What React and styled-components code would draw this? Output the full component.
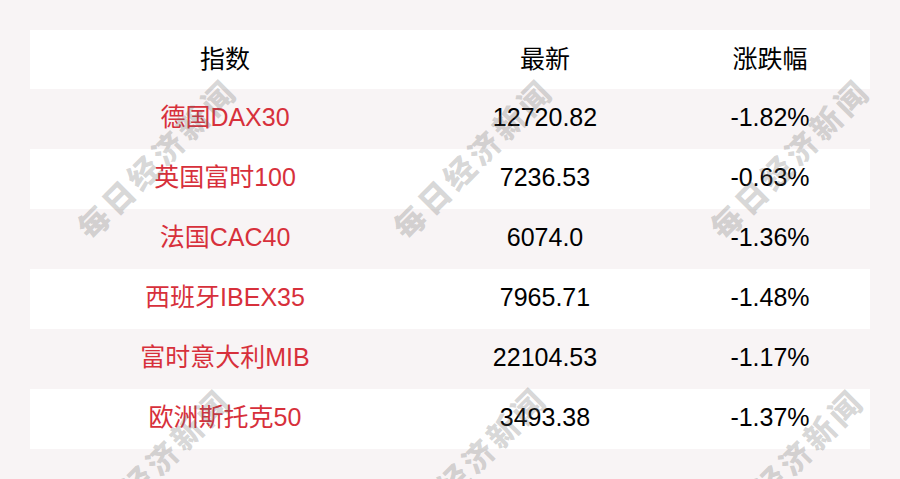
import React from "react";
import styled, { createGlobalStyle } from "styled-components";

const Global = createGlobalStyle`
  html, body { margin: 0; padding: 0; background: #f8f4f5; }
  body { font-family: "Liberation Sans", "Noto Sans CJK SC", sans-serif; }
`;

const Page = styled.div`
  position: relative;
  width: 900px;
  height: 479px;
  overflow: hidden;
  background: #f8f4f5;
  padding: 30px;
  box-sizing: border-box;
`;

const Table = styled.div`
  display: grid;
  grid-template-columns: 390px 250px 200px;
  width: 840px;
`;

const Row = styled.div`
  display: contents;
`;

const Cell = styled.div`
  height: ${(p) => (p.$header ? 59 : 60)}px;
  box-sizing: border-box;
  padding-bottom: ${(p) => (p.$header ? 0 : 3)}px;
  display: flex;
  align-items: center;
  justify-content: center;
  background: ${(p) => (p.$striped ? "#f8f4f5" : "#ffffff")};
  color: ${(p) => (p.$red ? "#d7303b" : "#000000")};
  font-size: 25px;
  line-height: 1;
  white-space: nowrap;
`;

const Watermark = styled.div`
  position: absolute;
  left: ${(p) => p.$x}px;
  top: ${(p) => p.$y}px;
  transform: translate(-50%, -50%) rotate(-45deg);
  font-family: "Noto Sans CJK SC", sans-serif;
  font-weight: 900;
  font-size: 31px;
  letter-spacing: 4px;
  color: rgba(100, 100, 100, 0.26);
  white-space: nowrap;
  pointer-events: none;
`;

const rows = [
  ["德国DAX30", "12720.82", "-1.82%"],
  ["英国富时100", "7236.53", "-0.63%"],
  ["法国CAC40", "6074.0", "-1.36%"],
  ["西班牙IBEX35", "7965.71", "-1.48%"],
  ["富时意大利MIB", "22104.53", "-1.17%"],
  ["欧洲斯托克50", "3493.38", "-1.37%"],
];

const marks = [
  [156, 158],
  [472, 158],
  [789, 158],
  [150, 468],
  [466, 466],
  [783, 468],
];

export default function App() {
  return (
    <>
      <Global />
      <Page>
        <Table>
          <Row>
            <Cell $header>指数</Cell>
            <Cell $header>最新</Cell>
            <Cell $header>涨跌幅</Cell>
          </Row>
          {rows.map((r, i) => (
            <Row key={r[0]}>
              <Cell $striped={i % 2 === 0} $red>{r[0]}</Cell>
              <Cell $striped={i % 2 === 0}>{r[1]}</Cell>
              <Cell $striped={i % 2 === 0}>{r[2]}</Cell>
            </Row>
          ))}
        </Table>
        {marks.map(([x, y], i) => (
          <Watermark key={i} $x={x} $y={y}>每日经济新闻</Watermark>
        ))}
      </Page>
    </>
  );
}
